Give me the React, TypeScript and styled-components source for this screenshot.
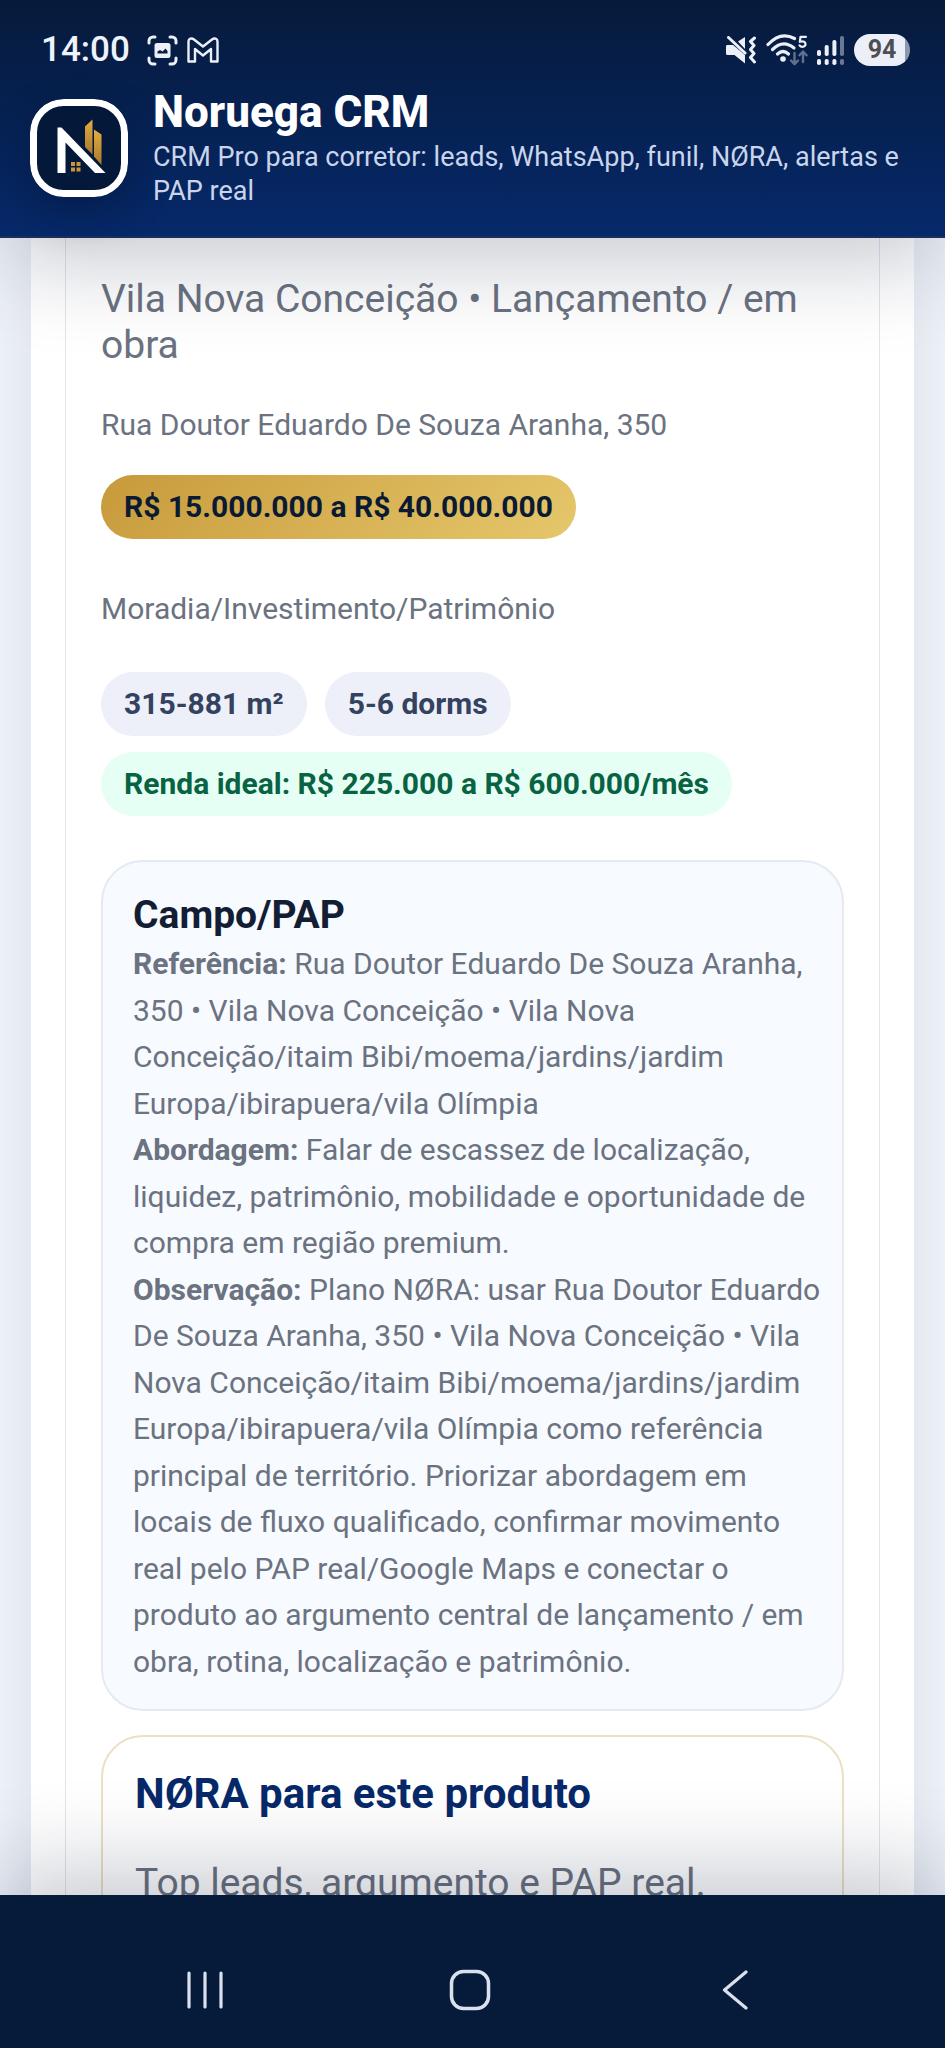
import React from 'react';
import styled, { createGlobalStyle } from 'styled-components';

const GlobalStyle = createGlobalStyle`
  *, *::before, *::after { box-sizing: border-box; }
  body {
    margin: 0;
    font-family: Roboto, "Liberation Sans", sans-serif;
    color: #6b7280;
    background: #f1f5fa;
  }
  h1, h2, p, ul { margin: 0; padding: 0; }
`;

const Screen = styled.div`
  height: 100vh;
  display: flex;
  flex-direction: column;
  overflow: hidden;
`;

const Header = styled.header`
  position: relative;
  z-index: 2;
  flex: none;
  padding-bottom: 28px;
  border-bottom: 2px solid #1c2f5c;
  background: linear-gradient(180deg, #061a3b 0%, #06296a 100%);
  box-shadow: 0 24px 90px rgba(7, 20, 50, 0.23);
`;

const StatusBar = styled.div`
  display: flex;
  align-items: flex-end;
  justify-content: space-between;
  height: 87px;
  padding: 0 35px 21px 41px;
`;

const StatusGroup = styled.div<{ $gap: number }>`
  display: flex;
  align-items: center;
  gap: ${(p) => p.$gap}px;
  height: 32px;
`;

const Clock = styled.time`
  margin-right: 8px;
  font-size: 35px;
  line-height: 32px;
  font-weight: 500;
  color: #eef2fb;
`;

const Battery = styled.span`
  width: 56px;
  height: 32px;
  border-radius: 16px;
  background: linear-gradient(90deg, #eceff7 51px, #8d98b0 51px);
  color: #4d4f55;
  font-size: 25px;
  line-height: 32px;
  font-weight: 700;
  text-align: center;
`;

const Brand = styled.div`
  display: flex;
  align-items: center;
  gap: 25px;
  padding: 0 30px;
`;

const Logo = styled.svg`
  flex: none;
  width: 98px;
  height: 98px;
  border-radius: 34px;
  box-shadow: 0 16px 40px rgba(3, 14, 38, 0.3);
`;

const BrandTitle = styled.h1`
  margin-bottom: 3px;
  font-size: 44px;
  line-height: 50px;
  font-weight: 800;
  color: #ffffff;
`;

const BrandText = styled.p`
  font-size: 27px;
  line-height: 34px;
  color: #c9d5ec;
`;

const Main = styled.main`
  flex: 1;
  min-height: 0;
  padding: 0 31px;
  overflow: hidden auto;
  scrollbar-width: none;
`;

const Panel = styled.section`
  padding: 0 34px;
  background: #ffffff;
  box-shadow: 0 30px 75px rgba(10, 35, 85, 0.1);
`;

const Product = styled.article`
  padding: 38px 35px 0;
  border: solid #e0e6ef;
  border-width: 0 1px;
`;

const Lead = styled.p`
  font-size: 39px;
  line-height: 46px;
`;

const Line = styled.p<{ $roomy?: boolean }>`
  margin: ${(p) => (p.$roomy ? '47px 0 40px' : '34px 0 27px')};
  font-size: 30px;
  line-height: 46px;
`;

const Tags = styled.ul`
  display: flex;
  flex-wrap: wrap;
  gap: 16px 18px;
  list-style: none;
`;

const tones = {
  gold: { ink: '#0a1a33', fill: 'linear-gradient(135deg, #c79a3b, #e6c76c)' },
  gray: { ink: '#34425f', fill: '#edf0f8' },
  green: { ink: '#086343', fill: '#e6fff4' },
};

const Tag = styled.li<{ $tone: keyof typeof tones }>`
  padding: 0 23px;
  border-radius: 32px;
  background: ${(p) => tones[p.$tone].fill};
  color: ${(p) => tones[p.$tone].ink};
  font-size: 30px;
  line-height: 64px;
  font-weight: 700;
`;

const Box = styled.section<{ $accent?: boolean }>`
  margin-top: ${(p) => (p.$accent ? 24 : 44)}px;
  padding: ${(p) => (p.$accent ? '31px 32px' : '27px 18px 24px 30px')};
  border: ${(p) => (p.$accent ? '2px solid #ebe1c2' : '2px solid #e5eaf2')};
  border-radius: 42px;
  background: ${(p) => (p.$accent ? '#ffffff' : '#f7faff')};
`;

const BoxTitle = styled.h2<{ $accent?: boolean }>`
  font-size: ${(p) => (p.$accent ? 42 : 39)}px;
  line-height: 52px;
  font-weight: 700;
  color: ${(p) => (p.$accent ? '#07296a' : '#131d33')};
`;

const Detail = styled.p`
  font-size: 30px;
  line-height: 1.55;
`;

const Pitch = styled(Lead)`
  margin-top: 40px;
`;

const NavBar = styled.nav`
  position: relative;
  z-index: 2;
  flex: none;
  display: flex;
  padding: 37px 78px 0 72px;
  height: 153px;
  background: #061b3a;
  box-shadow: 0 -24px 90px rgba(7, 20, 50, 0.23);
`;

const NavButton = styled.button`
  flex: 1;
  display: flex;
  align-items: center;
  justify-content: center;
  padding: 0;
  border: 0;
  background: none;
  color: #dbe1ec;
`;

const ink = '#eceff8';

const CaptureIcon = () => (
  <svg width="31" height="31" viewBox="0 0 31 31" fill="none" stroke={ink} strokeWidth="3" strokeLinecap="round" aria-hidden="true">
    <path d="M2 8V6a4 4 0 0 1 4-4h2M23 2h2a4 4 0 0 1 4 4v2M29 23v2a4 4 0 0 1-4 4h-2M8 29H6a4 4 0 0 1-4-4v-2" />
    <rect x="7.500" y="8" width="16" height="15" rx="2.500" fill={ink} stroke="none" />
    <path d="M10.500 18.500v-2l2.500-1.500 2.500 1.500 3-3 2 2.500v2.500z" fill="#061f49" stroke="none" />
  </svg>
);

const MailIcon = () => (
  <svg width="32" height="26" viewBox="0 0 32 26" fill="none" stroke={ink} strokeWidth="2.400" strokeLinejoin="round" aria-hidden="true">
    <path d="M1.500 4.500C1.500 1.500 4.500.500 7 2.500L16 9.500l9-7c2.500-2 5.500-1 5.500 2V24.500H24V12l-8 6.500L8 12v12.500H1.500z" />
  </svg>
);

const MutedIcon = () => (
  <svg width="32" height="28" viewBox="0 0 32 28" fill="none" aria-hidden="true">
    <path d="M2 9h6L20 19v8.500L9.500 19H2.500Q1 19 1 17.500V10.500Q1 9 2 9zM13 5.500 20 1v12z" fill={ink} />
    <path d="M3.500 1.500 20 17" stroke={ink} strokeWidth="3" strokeLinecap="round" />
    <path d="m29.500 2-4 3.500 3.500 4-3.500 4 3.500 4-3.500 4 4 4.500" stroke={ink} strokeWidth="3" strokeLinecap="round" strokeLinejoin="round" />
  </svg>
);

const WifiIcon = () => (
  <svg width="42" height="32" viewBox="0 0 42 32" fill="none" strokeLinecap="round" aria-hidden="true">
    <g stroke={ink} strokeWidth="3.200">
      <path d="M2 10.500Q14.500-3 28.500 4.500" />
      <path d="M6.500 15.500Q17 5 28 14" />
      <path d="M11.500 20q5.500-5 11 0" />
    </g>
    <circle cx="17" cy="25" r="2.800" fill={ink} />
    <path d="M40 2.800h-5.500l-.7 5q5.700-1.300 5.700 2.200c0 3.200-4.300 3.600-6 1.300" stroke={ink} strokeWidth="2.200" strokeLinejoin="round" />
    <path d="M28.500 19v11m-3.500-3.500 3.500 3.700 3.500-3.700M37 28V18m-3.500 3.300L37 17.500l3.500 3.800" stroke="#62708f" strokeWidth="2.400" strokeLinejoin="round" />
  </svg>
);

const SignalIcon = () => (
  <svg width="28" height="30" viewBox="0 0 28 30" fill={ink} aria-hidden="true">
    <rect x="0" y="15" width="4" height="6" rx="1.800" />
    <rect x="7.700" y="10" width="4" height="11" rx="1.800" />
    <rect x="15.400" y="5" width="4" height="16" rx="1.800" />
    <rect x="0" y="24" width="4" height="6" rx="1.800" />
    <rect x="7.700" y="24" width="4" height="6" rx="1.800" />
    <rect x="15.400" y="24" width="4" height="6" rx="1.800" />
    <rect x="23" y="1" width="4" height="20" rx="1.800" fill="#6a7896" />
    <rect x="23" y="24" width="4" height="6" rx="1.800" fill="#6a7896" />
  </svg>
);

const BrandLogo = () => (
  <Logo viewBox="0 0 98 98" role="img" aria-label="Noruega">
    <defs>
      <linearGradient id="tower" x1="0" y1="0" x2="0" y2="1">
        <stop offset="0" stopColor="#e2ad42" />
        <stop offset="1" stopColor="#a9792a" />
      </linearGradient>
    </defs>
    <rect x="3.500" y="3.500" width="91" height="91" rx="30" fill="#04183a" stroke="#ffffff" strokeWidth="7" />
    <path d="M55 27.500 62.500 20.500V55.500L55 48z" fill="url(#tower)" />
    <path d="M64 30.500 71.500 35.500V66L64 57.500z" fill="url(#tower)" />
    <path d="M27.500 28.500h4L75.500 74H65L35.500 43.500V74h-8z" fill="#ffffff" />
    <path d="M41 63h4v4h-4zM46.500 63h4v4h-4zM41 68.500h4v4h-4zM46.500 68.500h4v4h-4z" fill="#c9963a" />
  </Logo>
);

export default function App() {
  return (
    <>
      <GlobalStyle />
      <Screen>
        <Header>
          <StatusBar>
            <StatusGroup $gap={9}>
              <Clock>14:00</Clock>
              <CaptureIcon />
              <MailIcon />
            </StatusGroup>
            <StatusGroup $gap={9}>
              <MutedIcon />
              <WifiIcon />
              <SignalIcon />
              <Battery>94</Battery>
            </StatusGroup>
          </StatusBar>
          <Brand>
            <BrandLogo />
            <div>
              <BrandTitle>Noruega CRM</BrandTitle>
              <BrandText>CRM Pro para corretor: leads, WhatsApp, funil, NØRA, alertas e PAP real</BrandText>
            </div>
          </Brand>
        </Header>

        <Main>
          <Panel>
            <Product>
              <Lead>Vila Nova Conceição • Lançamento / em obra</Lead>
              <Line>Rua Doutor Eduardo De Souza Aranha, 350</Line>
              <Tags>
                <Tag $tone="gold">R$ 15.000.000 a R$ 40.000.000</Tag>
              </Tags>
              <Line $roomy>Moradia/Investimento/Patrimônio</Line>
              <Tags>
                <Tag $tone="gray">315-881 m²</Tag>
                <Tag $tone="gray">5-6 dorms</Tag>
                <Tag $tone="green">Renda ideal: R$ 225.000 a R$ 600.000/mês</Tag>
              </Tags>
              <Box>
                <BoxTitle>Campo/PAP</BoxTitle>
                <Detail>
                  <b>Referência:</b> Rua Doutor Eduardo De Souza Aranha, 350 • Vila Nova Conceição • Vila Nova
                  Conceição/itaim Bibi/moema/jardins/jardim Europa/ibirapuera/vila Olímpia
                </Detail>
                <Detail>
                  <b>Abordagem:</b> Falar de escassez de localização, liquidez, patrimônio, mobilidade e oportunidade de
                  compra em região premium.
                </Detail>
                <Detail>
                  <b>Observação:</b> Plano NØRA: usar Rua Doutor Eduardo De Souza Aranha, 350 • Vila Nova Conceição •
                  Vila Nova Conceição/itaim Bibi/moema/jardins/jardim Europa/ibirapuera/vila Olímpia como referência
                  principal de território. Priorizar abordagem em locais de fluxo qualificado, confirmar movimento real
                  pelo PAP real/Google Maps e conectar o produto ao argumento central de lançamento / em obra, rotina,
                  localização e patrimônio.
                </Detail>
              </Box>
              <Box $accent>
                <BoxTitle $accent>NØRA para este produto</BoxTitle>
                <Pitch>Top leads, argumento e PAP real.</Pitch>
              </Box>
            </Product>
          </Panel>
        </Main>

        <NavBar aria-label="Sistema">
          <NavButton type="button" aria-label="Recentes">
            <svg width="38" height="38" viewBox="0 0 38 38" stroke="currentColor" strokeWidth="3.200" strokeLinecap="round" aria-hidden="true">
              <path d="M3 2v34M19 2v34M35 2v34" />
            </svg>
          </NavButton>
          <NavButton type="button" aria-label="Início">
            <svg width="42" height="42" viewBox="0 0 42 42" fill="none" stroke="currentColor" strokeWidth="3.500" aria-hidden="true">
              <rect x="2.500" y="2.500" width="37" height="37" rx="12" />
            </svg>
          </NavButton>
          <NavButton type="button" aria-label="Voltar">
            <svg width="26" height="40" viewBox="0 0 26 40" fill="none" stroke="currentColor" strokeWidth="3.200" strokeLinecap="round" strokeLinejoin="round" aria-hidden="true">
              <path d="M24 2 2.500 20 24 38" />
            </svg>
          </NavButton>
        </NavBar>
      </Screen>
    </>
  );
}
